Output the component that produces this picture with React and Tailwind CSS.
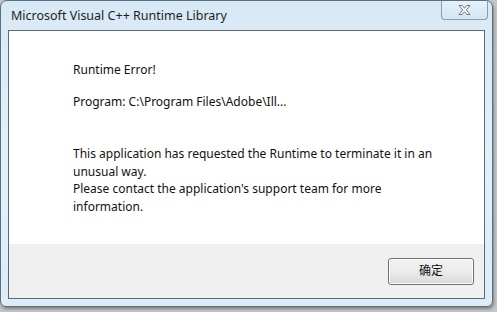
import React from "react";

const CloseGlyph = () => (
  <svg width="15" height="12" viewBox="0 0 15 12">
    <path
      d="M2 1.5h3.2l2.3 2.8 2.3-2.8H13L9.3 6 13 10.5H9.8L7.5 7.7 5.2 10.5H2L5.7 6z"
      fill="#ffffff"
      stroke="#6f7a86"
      strokeWidth="1"
      strokeLinejoin="round"
    />
  </svg>
);

const App = () => {
  const font = { fontFamily: '"Noto Sans", "Noto Sans CJK SC", sans-serif' };

  return (
    <div className="w-[497px] h-[312px] bg-[#c3c6c9] overflow-hidden" style={font}>
      <div className="w-[493px] h-[307px] rounded-t-[7px] rounded-b-[6px] border border-[#5f6e7c] bg-gradient-to-b from-[#d8e9f6] via-[#e2f0fa] to-[#dcedf8] flex flex-col shadow-[1px_2px_3px_rgba(0,0,0,0.35)]">
        {/* title bar */}
        <div className="h-[29px] flex items-start">
          <span className="pl-[10px] pt-[7px] text-[12.5px] leading-[16px] text-[#1e1e1e]">
            Microsoft Visual C++ Runtime Library
          </span>
          <div className="ml-auto mr-[4px] w-[47px] h-[19px] border border-t-0 border-[#8d9aa8] rounded-b-[4px] bg-gradient-to-b from-[#e4f1fa] to-[#d3e6f4] flex items-center justify-center">
            <CloseGlyph />
          </div>
        </div>

        {/* client area */}
        <div className="mx-[7px] mb-[7px] flex-1 border border-[#5d6976] flex flex-col bg-white">
          <div className="flex-1 pl-[64px] pt-[30px] text-[12px] leading-[17.5px] text-[#111] whitespace-nowrap">
            <p>Runtime Error!</p>
            <p className="mt-[14px]">Program: C:\Program Files\Adobe\Ill...</p>
            <p className="mt-[35px]">
              This application has requested the Runtime to terminate it in an
              <br />
              unusual way.
              <br />
              Please contact the application's support team for more
              <br />
              information.
            </p>
          </div>
          <div className="h-[54px] bg-[#f0f0f0] flex items-center justify-end pr-[10px]">
            <button className="w-[86px] h-[27px] rounded-[3px] border border-[#707070] bg-gradient-to-b from-[#f3f3f3] via-[#ebebeb] to-[#d9d9d9] text-[12px] text-[#111] flex items-center justify-center shadow-[inset_0_0_0_1px_#fcfcfc]">
              确定
            </button>
          </div>
        </div>
      </div>
    </div>
  );
};

export default App;
